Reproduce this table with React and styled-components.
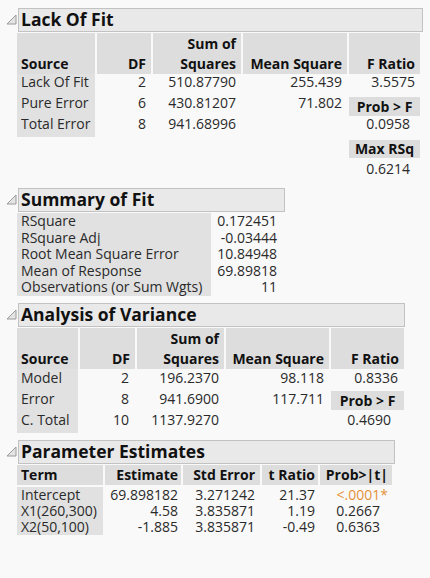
import React from 'react'
import styled, { createGlobalStyle } from 'styled-components'

const GlobalStyle = createGlobalStyle`
  body {
    margin: 0;
    background: #f9f9f9;
    font-family: 'Open Sans', 'Noto Sans', sans-serif;
    color: #2a2a2a;
  }
`;

const Page = styled.div`
  padding: 8px 0 0 6px;
`;

const Section = styled.section`
  margin-bottom: 7px;
`;

const TitleRow = styled.div`
  display: flex;
  align-items: flex-end;
`;

const Toggle = styled.svg`
  flex: none;
  width: 11px;
  height: 11px;
  margin: 0 1px 7px 0;
`;

const TitleBox = styled.div`
  box-sizing: border-box;
  width: ${p => p.$w}px;
  height: 24px;
  padding: 1px 0 0 2px;
  border: 1px solid #c2c2c2;
  background: #e9e9e9;
  color: #111;
  font-size: 17.5px;
  font-weight: 700;
  line-height: 19px;
  white-space: nowrap;
`;

const Body = styled.div`
  margin-top: 1px;
  padding-left: 11px;
`;

const Table = styled.div`
  display: grid;
  grid-template-columns: ${p => p.$cols};
  grid-template-rows: ${p => p.$rows};
  column-gap: ${p => p.$gap ?? 2}px;
  font-size: 14px;
  line-height: ${p => p.$lh}px;
  white-space: nowrap;
`;

const Head = styled.div`
  align-self: start;
  height: ${p => p.$h}px;
  box-sizing: border-box;
  display: flex;
  flex-direction: column;
  justify-content: flex-end;
  align-items: ${p => (p.$left ? 'flex-start' : 'flex-end')};
  padding: 0 ${p => p.$pr ?? 5}px 0 4px;
  background: #dddddd;
  color: #111;
  font-weight: 700;
  line-height: 20px;
`;

const Label = styled.div`
  padding-left: 4px;
  background: #e1e1e1;
`;

const Num = styled.div`
  text-align: right;
  padding-right: ${p => p.$pr ?? 5}px;
  padding-top: ${p => p.$pt ?? 0}px;
  color: ${p => p.$alert ? '#e5923a' : 'inherit'};
`;

const Blank = styled.div``;

const StatTag = styled.div`
  margin-top: ${p => p.$mt}px;
  height: ${p => p.$h}px;
  background: #dddddd;
  color: #111;
  font-weight: 700;
  line-height: ${p => p.$h}px;
  text-align: center;
`;

function Disclosure() {
  return (
    <Toggle viewBox="0 0 11 11">
      <polygon points="1,10 10,1 10,10" fill="#e4e4e4" stroke="#9a9a9a" strokeWidth="1" />
    </Toggle>
  )
}

function Outline({ title, width, children }) {
  return (
    <Section>
      <TitleRow>
        <Disclosure />
        <TitleBox $w={width}>{title}</TitleBox>
      </TitleRow>
      <Body>{children}</Body>
    </Section>
  )
}

const lackOfFit = [
  ['Lack Of Fit', '2', '510.87790', '255.439'],
  ['Pure Error', '6', '430.81207', '71.802'],
  ['Total Error', '8', '941.68996', ''],
];

const summary = [
  ['RSquare', '0.172451'],
  ['RSquare Adj', '-0.03444'],
  ['Root Mean Square Error', '10.84948'],
  ['Mean of Response', '69.89818'],
  ['Observations (or Sum Wgts)', '11'],
];

const anova = [
  ['Model', '2', '196.2370', '98.118'],
  ['Error', '8', '941.6900', '117.711'],
  ['C. Total', '10', '1137.9270', ''],
];

const params = [
  ['Intercept', '69.898182', '3.271242', '21.37', '<.0001*'],
  ['X1(260,300)', '4.58', '3.835871', '1.19', '0.2667'],
  ['X2(50,100)', '-1.885', '3.835871', '-0.49', '0.6363'],
];

function TwoLineHead({ top, bottom, h, left }) {
  return (
    <Head $h={h} $left={left}>
      {top && <span>{top}</span>}
      <span>{bottom}</span>
    </Head>
  )
}

function LackOfFit() {
  return (
    <Outline title="Lack Of Fit" width={405}>
      <Table $cols="78px 54px 88px 104px 71px" $rows="41px 21px 21px 21px 21px 23px" $lh={15}>
        <TwoLineHead h={41} left bottom="Source" />
        <TwoLineHead h={41} bottom="DF" />
        <TwoLineHead h={41} top="Sum of" bottom="Squares" />
        <TwoLineHead h={41} bottom="Mean Square" />
        <TwoLineHead h={41} bottom="F Ratio" />

        {lackOfFit.map((r, i) => (
          <React.Fragment key={r[0]}>
            <Label>{r[0]}</Label>
            <Num>{r[1]}</Num>
            <Num>{r[2]}</Num>
            <Num>{r[3]}</Num>
            {i === 0 && <Num>3.5575</Num>}
            {i === 1 && <div><StatTag $mt={2} $h={19}>Prob &gt; F</StatTag></div>}
            {i === 2 && <Num $pr={10}>0.0958</Num>}
          </React.Fragment>
        ))}

        <Blank /><Blank /><Blank /><Blank />
        <div><StatTag $mt={3} $h={18}>Max RSq</StatTag></div>
        <Blank /><Blank /><Blank /><Blank />
        <Num $pr={10} $pt={3}>0.6214</Num>
      </Table>
    </Outline>
  )
}

function SummaryOfFit() {
  return (
    <Outline title="Summary of Fit" width={267}>
      <Table $cols="194px 73px" $rows="repeat(5, 16.6px)" $gap={0} $lh={16.6}>
        {summary.map(r => (
          <React.Fragment key={r[0]}>
            <Label>{r[0]}</Label>
            <Num $pr={7}>{r[1]}</Num>
          </React.Fragment>
        ))}
      </Table>
    </Outline>
  )
}

function AnalysisOfVariance() {
  return (
    <Outline title="Analysis of Variance" width={387}>
      <Table $cols="61px 55px 87px 103px 73px" $rows="41px 21px 21px 22px" $lh={17}>
        <TwoLineHead h={41} left bottom="Source" />
        <TwoLineHead h={41} bottom="DF" />
        <TwoLineHead h={41} top="Sum of" bottom="Squares" />
        <TwoLineHead h={41} bottom="Mean Square" />
        <TwoLineHead h={41} bottom="F Ratio" />

        {anova.map((r, i) => (
          <React.Fragment key={r[0]}>
            <Label>{r[0]}</Label>
            <Num $pr={6}>{r[1]}</Num>
            <Num>{r[2]}</Num>
            <Num>{r[3]}</Num>
            {i === 0 && <Num $pr={6}>0.8336</Num>}
            {i === 1 && <div><StatTag $mt={1} $h={19}>Prob &gt; F</StatTag></div>}
            {i === 2 && <Num $pr={13}>0.4690</Num>}
          </React.Fragment>
        ))}
      </Table>
    </Outline>
  )
}

function ParameterEstimates() {
  return (
    <Outline title="Parameter Estimates" width={377}>
      <Table $cols="86px 76px 77px 56px 72px" $rows="22px 16px 16px 16px" $lh={16}>
        <Head $h={20} $left>Term</Head>
        <Head $h={20} $pr={3}>Estimate</Head>
        <Head $h={20}>Std Error</Head>
        <Head $h={20} $pr={3}>t Ratio</Head>
        <Head $h={20} $pr={4}>Prob&gt;|t|</Head>

        {params.map(r => {
          const alert = r[4].endsWith('*')
          return (
            <React.Fragment key={r[0]}>
              <Label>{r[0]}</Label>
              <Num $pr={3}>{r[1]}</Num>
              <Num>{r[2]}</Num>
              <Num $pr={3}>{r[3]}</Num>
              <Num $pr={alert ? 4 : 12} $alert={alert}>{r[4]}</Num>
            </React.Fragment>
          )
        })}
      </Table>
    </Outline>
  )
}

export default function App() {
  return (
    <Page>
      <GlobalStyle />
      <LackOfFit />
      <SummaryOfFit />
      <AnalysisOfVariance />
      <ParameterEstimates />
    </Page>
  )
}
